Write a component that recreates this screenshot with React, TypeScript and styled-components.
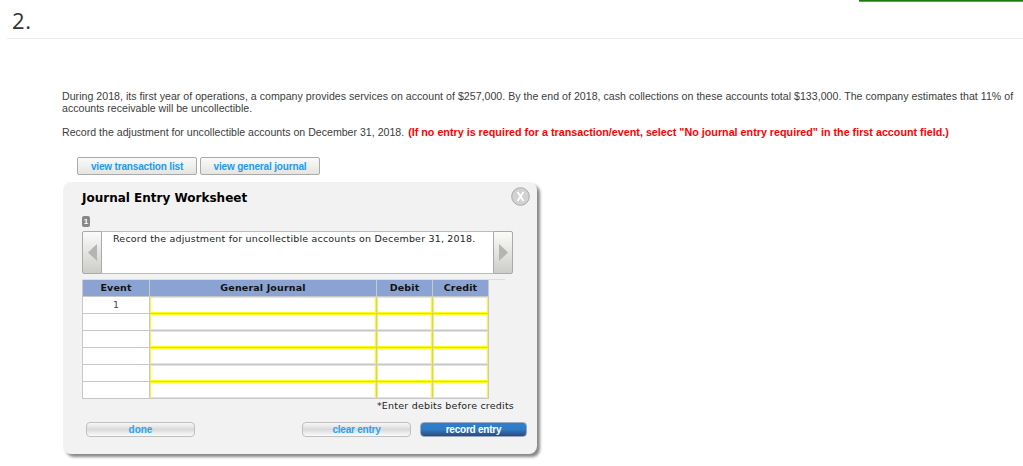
import { Fragment } from "react";
import styled, { createGlobalStyle } from "styled-components";

const GlobalStyle = createGlobalStyle`
  * {
    box-sizing: border-box;
  }

  body {
    margin: 0;
    background: #fff;
    overflow: hidden;
  }
`;

const Page = styled.div`
  width: 1023px;
  height: 466px;
  overflow: hidden;
  font-family: "Liberation Sans", Arial, sans-serif;
`;

const Accent = styled.div`
  width: 164px;
  height: 2px;
  margin-left: auto;
  background: #187a0a;
  border-bottom: 1px solid #5aa64f;
`;

const QuestionHeader = styled.header`
  display: flex;
  height: 37px;
  margin-left: 7px;
  padding: 5px 0 0 5px;
  border-bottom: 1px solid #ebebeb;
`;

const QuestionNumber = styled.h1`
  margin: 0;
  color: #333;
  font: 400 22px/27px "Open Sans", sans-serif;
  letter-spacing: 0.6px;
`;

const Content = styled.main`
  padding: 51px 0 0 62px;
`;

const Line = styled.div<{ $gap?: number; $spacing?: number }>`
  display: flex;
  gap: 4px;
  height: 12px;
  margin-bottom: ${props => props.$gap || 0}px;
  color: #3c3c3c;
  font-size: 10.6px;
  line-height: 12px;
  letter-spacing: ${props => props.$spacing || 0}px;
  white-space: nowrap;
`;

const Instruction = styled.strong`
  color: #f00;
  font-size: 10.75px;
`;

const ViewBar = styled.div`
  display: flex;
  gap: 3px;
  padding-left: 15px;
`;

const ViewButton = styled.button`
  width: 120px;
  height: 18px;
  padding: 0;
  border: 1px solid #aaa;
  border-radius: 2px;
  background: linear-gradient(#fafaf9, #e4e4e0);
  color: #1b9cf2;
  font: bold 10px/15px "Liberation Sans", Arial, sans-serif;
  letter-spacing: -0.16px;
`;

const Worksheet = styled.section`
  width: 474px;
  height: 272px;
  margin: 7px 0 0 1px;
  padding: 5px 7px 0 19px;
  border-radius: 8px;
  background: #f2f2f2;
  box-shadow: 3px 3px 3px #888;
  font-family: "DejaVu Sans", Verdana, sans-serif;
`;

const WorksheetHeader = styled.div`
  display: flex;
  justify-content: space-between;
  height: 29px;
`;

const Title = styled.h2`
  margin: 0;
  color: #000;
  font: bold 12px/22px "DejaVu Sans", Verdana, sans-serif;
`;

const CloseButton = styled.button`
  display: flex;
  width: 19px;
  height: 19px;
  padding: 0;
  border: 0;
  background: none;
`;

const StepBadge = styled.div`
  width: 8px;
  height: 11px;
  border-radius: 2px;
  background: #888;
  color: #fff;
  font: bold 8px/11px "Liberation Sans", Arial, sans-serif;
  text-align: center;
`;

const Carousel = styled.div`
  display: flex;
  width: 431px;
  height: 43px;
  margin-top: 4px;
`;

const ArrowButton = styled.button<{ $side: "left" | "right" }>`
  display: flex;
  align-items: center;
  justify-content: center;
  width: 20px;
  padding: 0;
  border: 1px solid #aaa;
  border-radius: ${props => (props.$side === "left" ? "2px 0 0 2px" : "0 2px 2px 0")};
  background: linear-gradient(#fbfbf9, #ccccc8);
`;

const Prompt = styled.div`
  flex: 1;
  padding-left: 11px;
  border: 1px solid #bbb;
  border-width: 1px 0;
  background: #fff;
  color: #222;
  font-size: 9.5px;
  line-height: 13px;
  letter-spacing: 0.19px;
  white-space: nowrap;
`;

const TableArea = styled.div`
  width: 423px;
  margin-top: 5px;
  border-top: 1px solid #ddd;
`;

const JournalGrid = styled.div`
  display: grid;
  grid-template-columns: 66px 226px 55px 55px;
  grid-template-rows: 16px repeat(6, 16px);
  gap: 1px;
  width: 407px;
  padding: 0 1px 1px;
  background: #c8c8c8;
`;

const HeadCell = styled.div`
  background: #8aa3d3;
  color: #111;
  font-size: 9.5px;
  font-weight: bold;
  line-height: 16px;
  letter-spacing: 0.15px;
  text-align: center;
`;

const EventCell = styled.div`
  background: #fff;
  color: #446;
  font-size: 9.5px;
  line-height: 15px;
  text-align: center;
`;

const EntryCell = styled.div`
  border: 1px solid #fbfb1e;
  background: #fff;
`;

const Note = styled.div`
  width: 432px;
  color: #222;
  font-size: 9.5px;
  line-height: 14px;
  letter-spacing: 0.21px;
  text-align: right;
`;

const Actions = styled.div`
  display: flex;
  gap: 9px;
  padding: 9px 0 0 4px;
`;

const ActionButton = styled.button<{ $primary?: boolean }>`
  flex-shrink: 0;
  width: ${props => (props.$primary ? 107 : 109)}px;
  height: 15px;
  padding: 0;
  border: ${props => (props.$primary ? "1px solid #9aa8bd" : "1px solid #bfbfbf")};
  border-radius: 4px;
  background: ${props =>
    props.$primary
      ? "linear-gradient(#2c80d0, #2e7ac5 50%, #2d4a7c)"
      : "linear-gradient(#f8f8f8, #dadada 50%, #fbfbfb)"};
  color: ${props => (props.$primary ? "#fff" : "#2ba3f5")};
  font: bold 10px/11px "Liberation Sans", Arial, sans-serif;
  letter-spacing: -0.22px;

  &:first-child {
    margin-right: 98px;
    letter-spacing: 0;
  }
`;

const COLUMNS = ["Event", "General Journal", "Debit", "Credit"];
const EVENTS = ["1", "", "", "", "", ""];

const App = () => {
  return (
    <Page>
      <GlobalStyle />
      <Accent />
      <QuestionHeader>
        <QuestionNumber>2.</QuestionNumber>
      </QuestionHeader>

      <Content>
        <Line $spacing={0.023}>
          During 2018, its first year of operations, a company provides services on account of $257,000. By the end of
          2018, cash collections on these accounts total $133,000. The company estimates that 11% of
        </Line>
        <Line $gap={12}>accounts receivable will be uncollectible.</Line>
        <Line $gap={19}>
          <span>Record the adjustment for uncollectible accounts on December 31, 2018.</span>
          <Instruction>
            (If no entry is required for a transaction/event, select "No journal entry required" in the first account
            field.)
          </Instruction>
        </Line>

        <ViewBar>
          <ViewButton>view transaction list</ViewButton>
          <ViewButton>view general journal</ViewButton>
        </ViewBar>

        <Worksheet>
          <WorksheetHeader>
            <Title>Journal Entry Worksheet</Title>
            <CloseButton aria-label="Close">
              <svg width="19" height="19" viewBox="0 0 19 19">
                <circle cx="9.5" cy="9.5" r="8.8" fill="#d2d2d2" stroke="#aaa" />
                <path d="M6.5 5l6 9M12.5 5l-6 9" stroke="#fff" strokeWidth="1.7" />
              </svg>
            </CloseButton>
          </WorksheetHeader>
          <StepBadge>1</StepBadge>

          <Carousel>
            <ArrowButton $side="left" aria-label="Previous">
              <svg width="9" height="17" viewBox="0 0 9 17">
                <path d="M9 0v17L0 8.5z" fill="#b4b4b4" />
              </svg>
            </ArrowButton>
            <Prompt>Record the adjustment for uncollectible accounts on December 31, 2018.</Prompt>
            <ArrowButton $side="right" aria-label="Next">
              <svg width="9" height="17" viewBox="0 0 9 17">
                <path d="M0 0v17l9-8.5z" fill="#b4b4b4" />
              </svg>
            </ArrowButton>
          </Carousel>

          <TableArea>
            <JournalGrid>
              {COLUMNS.map(column => (
                <HeadCell key={column}>{column}</HeadCell>
              ))}
              {EVENTS.map((event, index) => (
                <Fragment key={index}>
                  <EventCell>{event}</EventCell>
                  <EntryCell />
                  <EntryCell />
                  <EntryCell />
                </Fragment>
              ))}
            </JournalGrid>
          </TableArea>
          <Note>*Enter debits before credits</Note>

          <Actions>
            <ActionButton>done</ActionButton>
            <ActionButton>clear entry</ActionButton>
            <ActionButton $primary>record entry</ActionButton>
          </Actions>
        </Worksheet>
      </Content>
    </Page>
  );
};

export default App;
